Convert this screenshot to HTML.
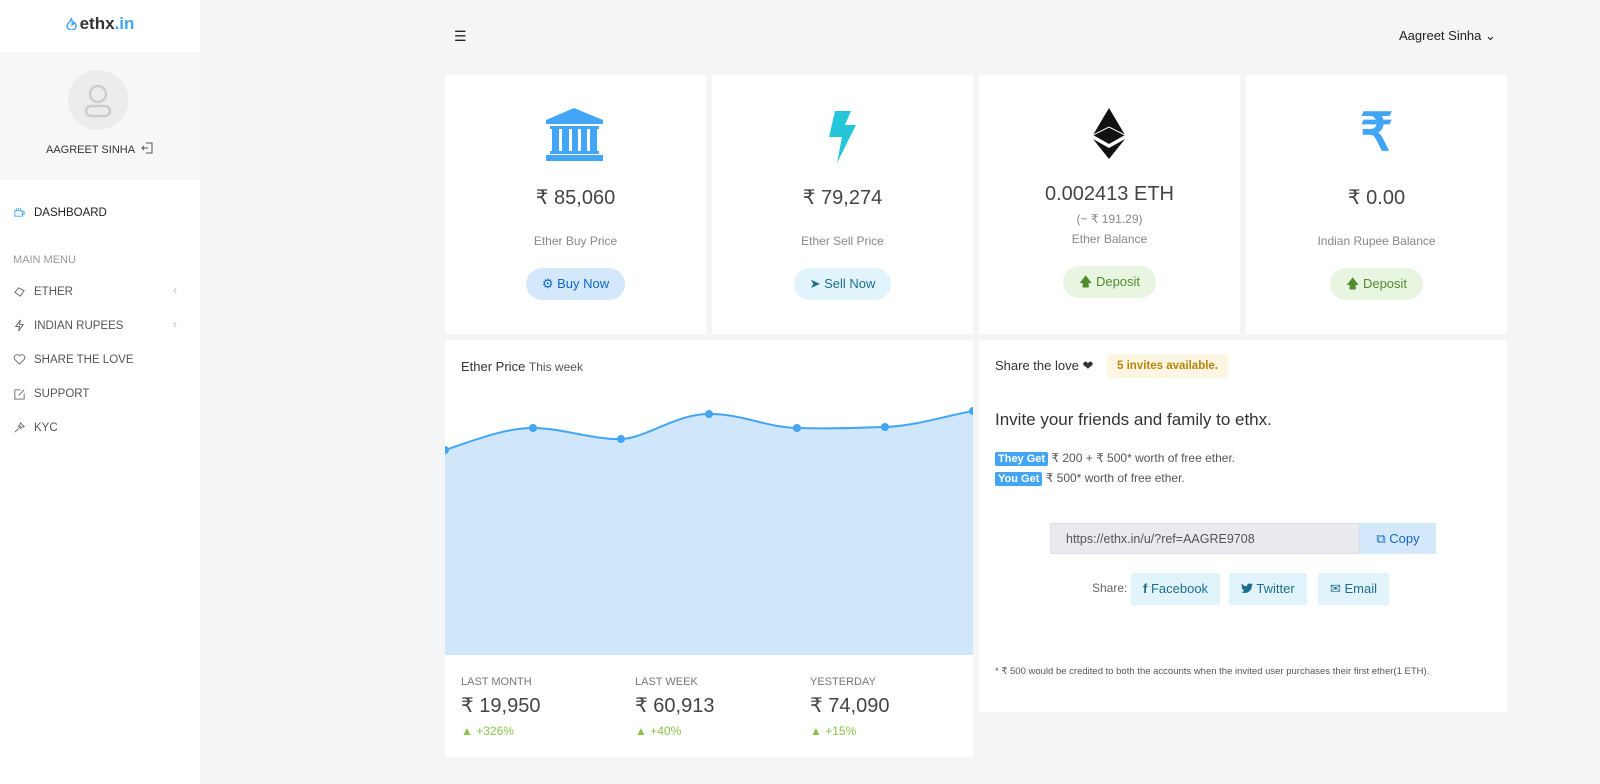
<!DOCTYPE html>
<html><head><meta charset="utf-8"><style>
*{box-sizing:border-box;margin:0;padding:0}
body{width:1600px;height:784px;background:#f4f5f7;font-family:"Liberation Sans",sans-serif;color:#444;position:relative;overflow:hidden}
.sb{position:absolute;left:0;top:0;width:200px;height:784px;background:#fff}
.logo{position:absolute;top:14px;left:0;width:200px;text-align:center;font-weight:bold;font-size:17px;color:#333}
.logo span{color:#42a5f5}
.prof{position:absolute;top:52px;left:0;width:200px;height:128px;background:#f7f7f7}
.av{position:absolute;left:68px;top:18px;width:60px;height:60px;border-radius:50%;background:#ececec}
.pn{position:absolute;top:90px;left:46px;font-size:11px;color:#333}
.mi{position:absolute;left:13px;font-size:11.5px;color:#555;display:flex;align-items:center;gap:8px}
.mi svg{width:13px;height:13px}
.chev{position:absolute;left:173px;font-size:12px;color:#bbb}
.card{position:absolute;background:#fff;text-align:center}
.big{font-size:20px;color:#444}
.lbl{font-size:12px;color:#888}
.btn{display:inline-block;border-radius:16px;padding:0 16px;height:32px;line-height:32px;font-size:13px}
.stat{position:absolute;top:676px}
.stat .t{font-size:11px;color:#777}
.stat .v{font-size:20px;color:#444;margin-top:5px}
.stat .p{font-size:12px;color:#8bc34a;margin-top:6px}
.badge{display:inline-block;background:#42a5f5;color:#fff;font-weight:bold;font-size:11px;padding:1px 3px;border-radius:2px}
.sbtn{position:absolute;top:573px;height:32px;line-height:32px;background:#e1f3fb;color:#1d6e8c;font-size:13px;padding:0 12px;border-radius:2px}
</style></head><body>
<div class="sb">
<div class="logo"><svg width="11" height="13" viewBox="0 0 11 13" style="vertical-align:-1px;margin-right:3px"><path d="M5 1C6 4 1 6 1 9a4.5 4 0 009 0C10 7 8 5 8 5 8 7 7 8 6 8 7 5 5 1 5 1z" fill="none" stroke="#42a5f5" stroke-width="1.4"/></svg>ethx<span>.in</span></div>
<div class="prof"><div class="av"><svg width="60" height="60" viewBox="0 0 60 60"><circle cx="30" cy="24" r="8" fill="none" stroke="#ccc" stroke-width="2.5"/><rect x="18" y="36" width="24" height="10" rx="5" fill="none" stroke="#ccc" stroke-width="2.5"/></svg></div>
<div class="pn">AAGREET SINHA &nbsp;<svg width="12" height="12" viewBox="0 0 12 12" style="vertical-align:-1px"><path d="M5 1h6v10H5M1 6h6M3 4L1 6l2 2" fill="none" stroke="#555"/></svg></div></div>
<div class="mi" style="top:206px;color:#222"><svg viewBox="0 0 14 14"><path d="M2 5h8v6H2zM10 6h2v3h-2M4 2v2M6 2v2M8 2v2" fill="none" stroke="#42a5f5"/></svg>DASHBOARD</div>
<div class="mi" style="top:254px;color:#999;font-size:11px;gap:0">MAIN MENU</div>
<div class="mi" style="top:285px"><svg viewBox="0 0 14 14"><path d="M2 8l4-5 6 3-4 6z" fill="none" stroke="#666"/></svg>ETHER</div><div class="chev" style="top:283px">&lsaquo;</div>
<div class="mi" style="top:319px"><svg viewBox="0 0 14 14"><path d="M8 1L3 8h4l-1 5 5-7H7z" fill="none" stroke="#666"/></svg>INDIAN RUPEES</div><div class="chev" style="top:317px">&lsaquo;</div>
<div class="mi" style="top:353px"><svg viewBox="0 0 14 14"><path d="M7 12L2 7a3 3 0 015-4 3 3 0 015 4z" fill="none" stroke="#666"/></svg>SHARE THE LOVE</div>
<div class="mi" style="top:387px"><svg viewBox="0 0 14 14"><path d="M2 3h6M2 3v10h10V7M6 9l6-6" fill="none" stroke="#666"/></svg>SUPPORT</div>
<div class="mi" style="top:421px"><svg viewBox="0 0 14 14"><path d="M2 12l4-4M5 5l4 4M8 2l4 4-3 1-2-2z" fill="none" stroke="#666"/></svg>KYC</div>
</div>
<div style="position:absolute;left:454px;top:28px;font-size:14px;color:#222">&#9776;</div>
<div style="position:absolute;left:1399px;top:28px;font-size:13px;color:#222">Aagreet Sinha &#8964;</div>

<div class="card" style="left:445px;top:75px;width:261px;height:259px">
<svg style="position:absolute;left:101px;top:33px" width="57" height="53" viewBox="0 0 57 53"><path d="M28 0L0 12v4h57v-4z" fill="#42a5f5"/><rect x="4" y="18" width="49" height="3" fill="#42a5f5"/><rect x="6" y="21" width="7" height="22" fill="#42a5f5"/><rect x="16" y="21" width="7" height="22" fill="#42a5f5"/><rect x="26" y="21" width="6" height="22" fill="#42a5f5"/><rect x="35" y="21" width="6" height="22" fill="#42a5f5"/><rect x="44" y="21" width="7" height="22" fill="#42a5f5"/><rect x="4" y="43" width="49" height="3" fill="#42a5f5"/><rect x="0" y="47" width="57" height="6" fill="#42a5f5"/></svg>
<div class="big" style="position:absolute;top:110px;width:100%">₹ 85,060</div>
<div class="lbl" style="position:absolute;top:159px;width:100%">Ether Buy Price</div>
<div style="position:absolute;top:193px;width:100%"><span class="btn" style="background:#d3e9fb;color:#1565c0">&#9881; Buy Now</span></div></div>

<div class="card" style="left:712px;top:75px;width:261px;height:259px">
<svg style="position:absolute;left:117px;top:36px" width="28" height="52" viewBox="0 0 28 52"><path d="M6 0h16l-6 14h11L8 52l5-26H0z" fill="#26c6da"/></svg>
<div class="big" style="position:absolute;top:110px;width:100%">₹ 79,274</div>
<div class="lbl" style="position:absolute;top:159px;width:100%">Ether Sell Price</div>
<div style="position:absolute;top:193px;width:100%"><span class="btn" style="background:#e1f3fb;color:#1d6e8c">&#10148; Sell Now</span></div></div>

<div class="card" style="left:979px;top:75px;width:261px;height:259px">
<svg style="position:absolute;left:114px;top:33px" width="32" height="51" viewBox="0 0 32 51"><path d="M16 0L0 27l16 9 16-9z" fill="#111"/><path d="M0 31l16 20 16-20-16 9z" fill="#111"/><path d="M0 27l16-8 16 8" fill="none" stroke="#fff" stroke-width="1"/></svg>
<div class="big" style="position:absolute;top:108px;width:100%">0.002413 ETH</div>
<div class="lbl" style="position:absolute;top:137px;width:100%">(~ ₹ 191.29)</div>
<div class="lbl" style="position:absolute;top:157px;width:100%">Ether Balance</div>
<div style="position:absolute;top:191px;width:100%"><span class="btn" style="background:#e8f5e0;color:#558b2f">&#129093; Deposit</span></div></div>

<div class="card" style="left:1246px;top:75px;width:261px;height:259px">
<div style="position:absolute;top:28px;width:100%;font-size:52px;font-weight:bold;color:#42a5f5">₹</div>
<div class="big" style="position:absolute;top:110px;width:100%">₹ 0.00</div>
<div class="lbl" style="position:absolute;top:159px;width:100%">Indian Rupee Balance</div>
<div style="position:absolute;top:193px;width:100%"><span class="btn" style="background:#e8f5e0;color:#558b2f">&#129093; Deposit</span></div></div>

<div class="card" style="left:445px;top:340px;width:528px;height:417px;text-align:left">
<div style="position:absolute;left:16px;top:19px;font-size:13px;color:#333">Ether Price <span style="font-size:12px;color:#555">This week</span></div>
<svg style="position:absolute;left:0;top:60px" width="528" height="256" viewBox="0 60 528 256"><path d="M0 110C30 100 60 88 88 88S150 100 176 99 230 74 264 74 320 87 352 88 410 88 440 87 500 76 528 71V315H0z" fill="#d0e7fb"/><path d="M0 110C30 100 60 88 88 88S150 100 176 99 230 74 264 74 320 87 352 88 410 88 440 87 500 76 528 71" fill="none" stroke="#42a5f5" stroke-width="2"/><g fill="#42a5f5"><circle cx="0" cy="110" r="4"/><circle cx="88" cy="88" r="4"/><circle cx="176" cy="99" r="4"/><circle cx="264" cy="74" r="4"/><circle cx="352" cy="88" r="4"/><circle cx="440" cy="87" r="4"/><circle cx="528" cy="71" r="4"/></g></svg>
</div>
<div class="stat" style="left:461px"><div class="t">LAST MONTH</div><div class="v">₹ 19,950</div><div class="p">▲ +326%</div></div>
<div class="stat" style="left:635px"><div class="t">LAST WEEK</div><div class="v">₹ 60,913</div><div class="p">▲ +40%</div></div>
<div class="stat" style="left:810px"><div class="t">YESTERDAY</div><div class="v">₹ 74,090</div><div class="p">▲ +15%</div></div>

<div class="card" style="left:979px;top:340px;width:528px;height:372px;text-align:left">
<div style="position:absolute;left:16px;top:18px;font-size:13px;color:#333">Share the love &#10084;&#xFE0E;</div>
<div style="position:absolute;left:128px;top:14px;background:#fdf6e3;color:#b8860b;font-size:11.5px;font-weight:bold;padding:6px 10px;border-radius:3px">5 invites available.</div>
<div style="position:absolute;left:16px;top:70px;font-size:17px;color:#333">Invite your friends and family to ethx.</div>
<div style="position:absolute;left:16px;top:111px;font-size:12px;color:#555"><span class="badge">They Get</span> ₹ 200 + ₹ 500* worth of free ether.</div>
<div style="position:absolute;left:16px;top:131px;font-size:12px;color:#555"><span class="badge">You Get</span> ₹ 500* worth of free ether.</div>
<div style="position:absolute;left:71px;top:183px;width:310px;height:31px;background:#e8eaed;border:1px solid #dde;font-size:12.5px;color:#555;line-height:30px;padding-left:15px">https://ethx.in/u/?ref=AAGRE9708</div>
<div style="position:absolute;left:381px;top:183px;width:76px;height:31px;background:#d3e9fb;color:#1565c0;font-size:13px;line-height:31px;text-align:center">&#10697; Copy</div>
<div style="position:absolute;left:113px;top:241px;font-size:12px;color:#666">Share:</div>
<div class="sbtn" style="left:152px;top:233px"><b>f</b> Facebook</div>
<div class="sbtn" style="left:250px;top:233px"><svg width="12" height="11" viewBox="0 0 12 11" style="vertical-align:-1px"><path d="M12 1.5c-.5.2-1 .4-1.4.4.5-.3.9-.8 1.1-1.4-.5.3-1 .5-1.6.6A2.5 2.5 0 006 3.3 7 7 0 01.9.7 2.5 2.5 0 001.6 4c-.4 0-.8-.1-1.1-.3 0 1.2.9 2.2 2 2.4-.4.1-.8.1-1.1 0 .3 1 1.2 1.7 2.3 1.7A5 5 0 010 8.9 7 7 0 0010.8 3v-.3c.5-.3.9-.8 1.2-1.2z" fill="#1d6e8c"/></svg> Twitter</div>
<div class="sbtn" style="left:339px;top:233px">&#9993; Email</div>
<div style="position:absolute;left:16px;top:326px;font-size:9.5px;color:#555">* ₹ 500 would be credited to both the accounts when the invited user purchases their first ether(1 ETH).</div>
</div>
</body></html>
